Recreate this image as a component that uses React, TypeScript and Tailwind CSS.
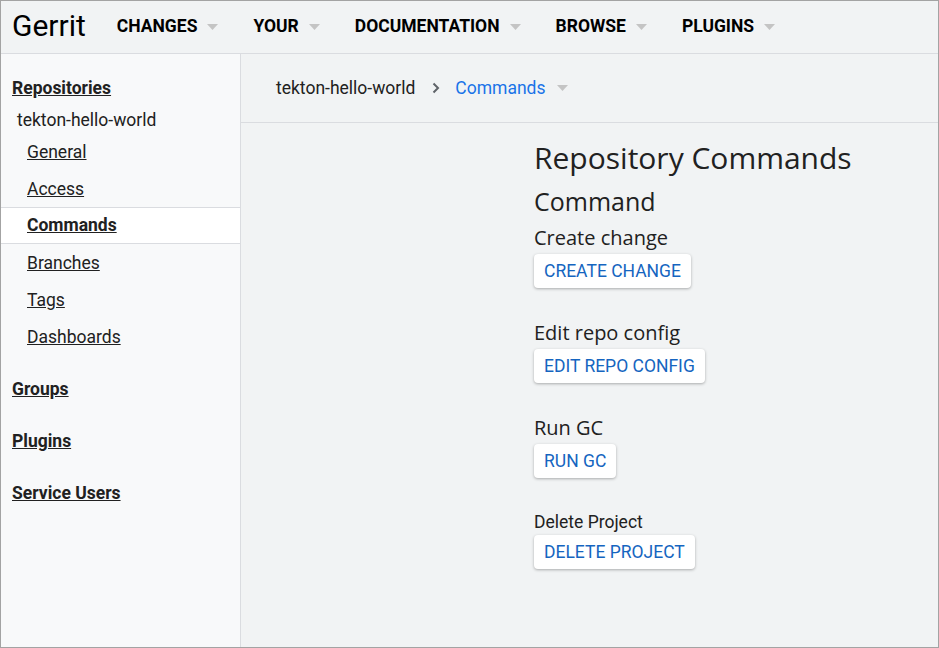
import React from "react";

const navItems = ["Changes", "Your", "Documentation", "Browse", "Plugins"];
const repoLinks = ["General", "Access", "Commands", "Branches", "Tags", "Dashboards"];

const commands = [
  { label: "Create change", button: "Create change", big: true },
  { label: "Edit repo config", button: "Edit repo config", big: true },
  { label: "Run GC", button: "Run GC", big: true },
  { label: "Delete Project", button: "Delete project", big: false },
];

function Caret({ className = "" }: { className?: string }) {
  return (
    <svg width="11" height="6" viewBox="0 0 11 6" className={className} aria-hidden="true">
      <path d="M0 0h11L5.5 6z" fill="#c4c4c4" />
    </svg>
  );
}

export default function App() {
  return (
    <div className="w-[939px] h-[648px] border border-[#a3a3a3] bg-[#f1f3f4] flex flex-col overflow-hidden font-['Roboto',sans-serif] text-[#212121]">
      <header className="h-[53px] shrink-0 flex items-center border-b border-[#dadce0] bg-[#f1f3f4]">
        <span className="ml-[11px] text-[30px] leading-none text-black -mt-[2px]">Gerrit</span>
        <nav className="flex items-center ml-[31px] -mt-[1px]">
          {navItems.map((n) => (
            <div key={n} className="flex items-center mr-[35px]">
              <span className="text-[17.5px] font-bold uppercase text-black">{n}</span>
              <Caret className="ml-[10px]" />
            </div>
          ))}
        </nav>
      </header>

      <div className="flex flex-1 min-h-0">
        <aside className="w-[240px] shrink-0 bg-[#f8f9fa] border-r border-[#dadce0] pt-[22px] text-[17.5px]">
          <a className="block pl-[11px] h-[24px] leading-[24px] font-bold underline">Repositories</a>
          <div className="pl-[16px] h-[33px] pt-[8px] leading-[24px]">tekton-hello-world</div>
          {repoLinks.map((l) => (
            <div
              key={l}
              className={
                l === "Commands"
                  ? "h-[37px] flex items-center pl-[26px] bg-white border-y border-[#dadce0] font-bold"
                  : "h-[37px] flex items-center pl-[26px] pt-[1px]"
              }
            >
              <a className="underline">{l}</a>
            </div>
          ))}
          <div className="mt-[22px] flex flex-col gap-[28px] pl-[11px] font-bold">
            <a className="underline h-[24px] leading-[24px]">Groups</a>
            <a className="underline h-[24px] leading-[24px]">Plugins</a>
            <a className="underline h-[24px] leading-[24px]">Service Users</a>
          </div>
        </aside>

        <main className="flex-1 flex flex-col">
          <div className="h-[69px] shrink-0 flex items-center pl-[35px] border-b border-[#dadce0] text-[17.5px]">
            <span>tekton-hello-world</span>
            <svg width="8" height="12" viewBox="0 0 8 12" className="ml-[17px] mr-[15px]" aria-hidden="true">
              <path d="M1.5 1.5L6 6l-4.5 4.5" stroke="#5f6368" strokeWidth="2" fill="none" />
            </svg>
            <span className="text-[#1a73e8]">Commands</span>
            <Caret className="ml-[11px]" />
          </div>

          <div className="pl-[293px] pt-[15px]">
            <h1 className="font-['Open_Sans',sans-serif] text-[30px] leading-[40px]">Repository Commands</h1>
            <h2 className="font-['Open_Sans',sans-serif] text-[25px] leading-[32px] mt-[7px]">Command</h2>
            {commands.map((c, i) => (
              <div key={c.label} className={i === 0 ? "mt-[8px]" : "mt-[32px]"}>
                <div
                  className={
                    c.big
                      ? "font-['Open_Sans',sans-serif] text-[20px] leading-[26px]"
                      : "font-['Roboto',sans-serif] text-[17.5px] leading-[24px]"
                  }
                >
                  {c.label}
                </div>
                <button
                  className={
                    (c.big ? "mt-[3px] " : "mt-[1px] ") +
                    "h-[34px] px-[10px] bg-white rounded-[4px] shadow-[0_1px_3px_rgba(0,0,0,0.3)] text-[17.5px] uppercase text-[#1565c0]"
                  }
                >
                  {c.button}
                </button>
              </div>
            ))}
          </div>
        </main>
      </div>
    </div>
  );
}
